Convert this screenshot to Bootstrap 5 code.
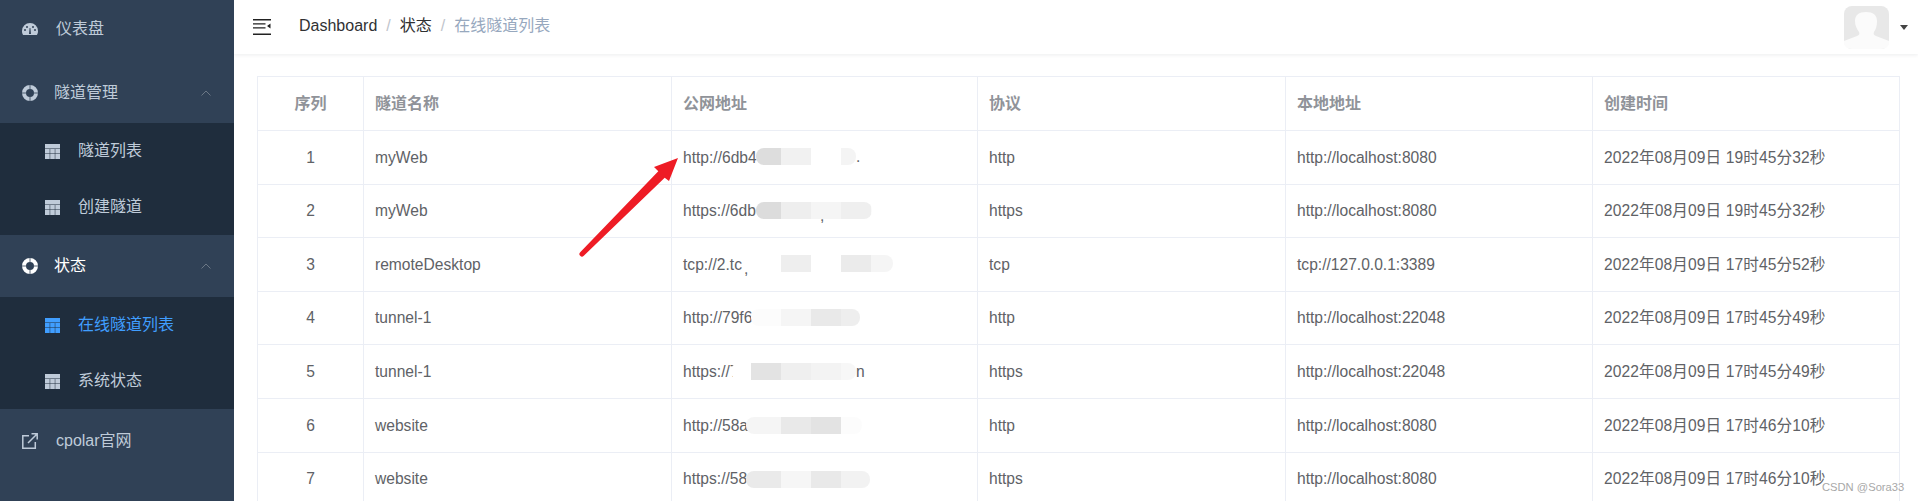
<!DOCTYPE html>
<html lang="en">
<head>
  <meta charset="UTF-8" />
  <meta name="viewport" content="width=device-width, initial-scale=1" />
  <title>cpolar</title>
  <link href="https://cdn.jsdelivr.net/npm/bootstrap@5.3.0/dist/css/bootstrap.min.css" rel="stylesheet" />
  <style>
    html, body { height: 100%; overflow: hidden; }
    body {
      position: relative;
      font-family: "Liberation Sans", "Noto Sans CJK SC", sans-serif;
      font-size: 15.6px;
      color: #606266;
    }
    .side-bar { width: 234px; background: #304156; flex-shrink: 0; }
    .side-link {
      display: flex;
      align-items: center;
      height: 62px;
      padding: 0 23px 4px 22px;
      color: #bfcbd9;
      font-size: 16px;
      text-decoration: none;
    }
    .side-link svg { flex-shrink: 0; }
    .side-link.sub-open { color: #bfcbd9; padding-bottom: 0; height: 61px; }
    .side-link.is-open { color: #fff; height: 62px; padding-bottom: 0; }
    .side-link.is-last { height: 64px; padding-bottom: 0; }
    .side-gap-wide { margin-right: 18px; }
    .side-gap { margin-right: 16px; }
    .sub-menu { background: #1f2d3d; }
    .sub-link {
      display: flex;
      align-items: center;
      height: 56px;
      padding-left: 45px;
      color: #bfcbd9;
      font-size: 16px;
      text-decoration: none;
    }
    .sub-link svg { margin-right: 18px; }
    .sub-link.is-active { color: #409eff; }
    .chev { margin-left: auto; }
    .top-bar {
      height: 54px;
      padding: 0 10px 0 19px;
      box-shadow: 0 1px 4px rgba(0, 21, 41, .08);
      flex-shrink: 0;
    }
    .crumbs { margin: 0 0 2px 28px; font-size: 16px; --bs-breadcrumb-item-padding-x: 9px; }
    .crumbs a { color: #303133; text-decoration: none; }
    .crumbs .active { color: #97a8be; }
    .breadcrumb-item + .breadcrumb-item::before { color: #c0c4cc; }
    .user-menu { color: #303133; text-decoration: none; }
    .user-menu.dropdown-toggle::after { margin-left: 11px; vertical-align: -21px; border-top-width: 5px; border-left-width: 4px; border-right-width: 4px; color: #444; }
    .page-body { padding: 22px 19px 0 23px; }
    .tunnel-table { table-layout: fixed; width: 1642px; margin: 0; --bs-table-border-color: #ebeef5; --bs-table-color: #606266; }
    .tunnel-table th, .tunnel-table td { padding: 0 11px; height: 53.6px; vertical-align: middle; font-weight: 400; color: #606266; }
    .tunnel-table th { height: 54px; font-weight: 700; font-size: 16px; color: #909399; }
    .w-idx { width: 106px; }
    .w-wide { width: 308px; }
    .w-mid { width: 307px; }
    .w-thin { width: 306px; }
    .stamp { letter-spacing: .1px; }
    .addr-cell { position: relative; }
    .smudge {
      position: absolute;
      height: 17px;
      border-radius: 8px;
    }
    .tail { position: absolute; left: 100%; top: -3px; }
    .speck { position: absolute; top: 2px; }
    .sm1 { left: 84px; top: 17px; width: 100px; background: linear-gradient(90deg, #ddd 0 25px, #f1f1f1 25px 55px, #fff 55px 85px, #f4f4f4 85px); }
    .sm2 { left: 84px; top: 17px; width: 116px; background: linear-gradient(90deg, #dcdcdc 0 25px, #eee 25px 55px, #f5f5f5 55px 85px, #efefef 85px 115px, #fafafa 115px); }
    .sm3 { left: 72px; top: 17px; width: 149px; background: linear-gradient(90deg, #fff 0 37px, #eee 37px 67px, #fff 67px 97px, #ebebeb 97px 127px, #f5f5f5 127px); }
    .sm4 { left: 79px; top: 17px; width: 109px; background: linear-gradient(90deg, #fcfcfc 0 30px, #f5f5f5 30px 60px, #e9e9e9 60px 90px, #eee 90px); }
    .sm5 { left: 59px; top: 18px; width: 125px; background: linear-gradient(90deg, #fff 0 20px, #e3e3e3 20px 50px, #efefef 50px 80px, #f3f3f3 80px 110px, #f7f7f7 110px); }
    .sm6 { left: 74px; top: 18px; width: 116px; background: linear-gradient(90deg, #f5f5f5 0 35px, #e9e9e9 35px 65px, #e3e3e3 65px 95px, #fcfcfc 95px); }
    .sm7 { left: 74px; top: 18px; width: 124px; background: linear-gradient(90deg, #eaeaea 0 35px, #f6f6f6 35px 65px, #e9e9e9 65px 95px, #f2f2f2 95px); }
    .arrow-mark { position: absolute; left: 575px; top: 150px; }
    .watermark {
      position: absolute;
      left: 1822px;
      top: 482px;
      font-size: 11.2px;
      color: #a8a8a8;
      line-height: 1;
    }
  </style>
</head>
<body>
  <div class="d-flex h-100">
    <aside class="side-bar">
      <nav class="d-flex flex-column">
        <a class="side-link" href="#">
          <svg class="side-gap-wide" width="16" height="14" viewBox="0 0 16 14"><path fill="#bfcbd9" fill-rule="evenodd" d="M8 1a8 8 0 0 0-8 8c0 1.6.4 3 1.2 4h13.6c.8-1 1.2-2.400 1.200-4a8 8 0 0 0-8-8zM7 12l.6-6h.8l.6 6zM3 9a1 1 0 1 1 0-2 1 1 0 0 1 0 2zm2-3a1 1 0 1 1 0-2 1 1 0 0 1 0 2zm6 0a1 1 0 1 1 0-2 1 1 0 0 1 0 2zm2 3a1 1 0 1 1 0-2 1 1 0 0 1 0 2z"/></svg>
          仪表盘
        </a>
        <a class="side-link sub-open" href="#">
          <svg class="side-gap" width="16" height="16" viewBox="0 0 16 16"><use href="#buoy-icon" stroke="#bfcbd9"/></svg>
          隧道管理
          <svg class="chev" width="10" height="6" viewBox="0 0 10 6"><path fill="none" stroke="#6b7785" d="M.5 5.500 5 1l4.500 4.500"/></svg>
        </a>
        <div class="sub-menu">
          <a class="sub-link" href="#">
            <svg width="15" height="15" viewBox="0 0 15 15"><use href="#grid-icon" fill="#bfcbd9"/></svg>
            隧道列表
          </a>
          <a class="sub-link" href="#">
            <svg width="15" height="15" viewBox="0 0 15 15"><use href="#grid-icon" fill="#bfcbd9"/></svg>
            创建隧道
          </a>
        </div>
        <a class="side-link is-open" href="#">
          <svg class="side-gap" width="16" height="16" viewBox="0 0 16 16"><use href="#buoy-icon" stroke="#fff"/></svg>
          状态
          <svg class="chev" width="10" height="6" viewBox="0 0 10 6"><path fill="none" stroke="#6b7785" d="M.5 5.500 5 1l4.500 4.500"/></svg>
        </a>
        <div class="sub-menu">
          <a class="sub-link is-active" href="#">
            <svg width="15" height="15" viewBox="0 0 15 15"><use href="#grid-icon" fill="#409eff"/></svg>
            在线隧道列表
          </a>
          <a class="sub-link" href="#">
            <svg width="15" height="15" viewBox="0 0 15 15"><use href="#grid-icon" fill="#bfcbd9"/></svg>
            系统状态
          </a>
        </div>
        <a class="side-link is-last" href="#">
          <svg class="side-gap-wide" width="16" height="16" viewBox="0 0 16 16"><path fill="none" stroke="#bfcbd9" stroke-width="1.500" d="M7 2.700H.8v12.500h12.500V9M6 10 15 1M9.500.8h5.700v5.700"/></svg>
          cpolar官网
        </a>
      </nav>
    </aside>

    <main class="flex-grow-1 d-flex flex-column overflow-hidden">
      <header class="top-bar d-flex align-items-center justify-content-between">
        <div class="d-flex align-items-center">
          <svg width="18" height="16" viewBox="0 0 18 16"><path fill="#222" d="M0 0h18v1.500H0zM0 4.300h12.500v1.200H0zM0 8.300h12.500v1.200H0zM0 14.500h18V16H0zM14 7l3.500-2.500v5z"/></svg>
          <nav aria-label="breadcrumb">
            <ol class="breadcrumb crumbs">
              <li class="breadcrumb-item"><a href="#">Dashboard</a></li>
              <li class="breadcrumb-item"><a href="#">状态</a></li>
              <li class="breadcrumb-item active" aria-current="page">在线隧道列表</li>
            </ol>
          </nav>
        </div>
        <a class="user-menu dropdown-toggle d-flex align-items-center" href="#" role="button">
          <svg width="45" height="43" viewBox="0 0 45 43"><rect width="45" height="43" rx="8" fill="#e8e8e8"/><path fill="#fbfbfb" d="M22 6c7 0 11 3 11 9 0 5-1 8-3 11-1 2 0 3 2 4l13 5v2c0 3-3 6-8 6H8c-5 0-8-3-8-6v-2l13-5c2-1 3-2 2-4-2-3-4-6-4-11 0-6 4-9 11-9z"/></svg>
        </a>
      </header>

      <div class="page-body">
        <table class="table table-bordered tunnel-table">
          <colgroup>
            <col class="w-idx" /><col class="w-wide" /><col class="w-thin" /><col class="w-wide" /><col class="w-mid" /><col class="w-mid" />
          </colgroup>
          <thead>
            <tr><th class="text-center">序列</th><th>隧道名称</th><th>公网地址</th><th>协议</th><th>本地地址</th><th>创建时间</th></tr>
          </thead>
          <tbody>
            <tr><td class="text-center">1</td><td>myWeb</td><td class="addr-cell">http://6db4<span class="smudge sm1"><span class="tail">.</span></span></td><td>http</td><td>http://localhost:8080</td><td class="stamp">2022年08月09日 19时45分32秒</td></tr>
            <tr><td class="text-center">2</td><td>myWeb</td><td class="addr-cell">https://6db<span class="smudge sm2"><span class="speck ms-5 ps-3">,</span></span></td><td>https</td><td>http://localhost:8080</td><td class="stamp">2022年08月09日 19时45分32秒</td></tr>
            <tr><td class="text-center">3</td><td>remoteDesktop</td><td class="addr-cell">tcp://2.tc<span class="smudge sm3"><span class="speck">,</span></span></td><td>tcp</td><td>tcp://127.0.0.1:3389</td><td class="stamp">2022年08月09日 17时45分52秒</td></tr>
            <tr><td class="text-center">4</td><td>tunnel-1</td><td class="addr-cell">http://79f6<span class="smudge sm4"></span></td><td>http</td><td>http://localhost:22048</td><td class="stamp">2022年08月09日 17时45分49秒</td></tr>
            <tr><td class="text-center">5</td><td>tunnel-1</td><td class="addr-cell">https://7<span class="smudge sm5"><span class="tail">n</span></span></td><td>https</td><td>http://localhost:22048</td><td class="stamp">2022年08月09日 17时45分49秒</td></tr>
            <tr><td class="text-center">6</td><td>website</td><td class="addr-cell">http://58a<span class="smudge sm6"></span></td><td>http</td><td>http://localhost:8080</td><td class="stamp">2022年08月09日 17时46分10秒</td></tr>
            <tr><td class="text-center">7</td><td>website</td><td class="addr-cell">https://58<span class="smudge sm7"></span></td><td>https</td><td>http://localhost:8080</td><td class="stamp">2022年08月09日 17时46分10秒</td></tr>
          </tbody>
        </table>
      </div>
    </main>
  </div>

  <svg class="arrow-mark" width="110" height="115" viewBox="0 0 110 115"><path fill="#ee1c25" d="M103 8 79 17l4.300 4.300L5.200 102.200a2.500 2.500 0 0 0 3.600 3.600L89.700 27.700 94 31z"/></svg>
  <div class="watermark">CSDN @Sora33</div>

  <svg width="0" height="0" class="d-block">
    <symbol id="grid-icon" viewBox="0 0 15 15"><path d="M0 0h15v4.600H0zM0 5.100h4.700v4.500H0zM5.200 5.100h4.600v4.500H5.200zM10.300 5.100H15v4.500h-4.700zM0 10.100h4.700V15H0zM5.200 10.100h4.600V15H5.200zM10.300 10.100H15V15h-4.700z"/></symbol>
    <symbol id="buoy-icon" viewBox="0 0 16 16"><circle cx="8" cy="8" r="6" fill="none" stroke-width="4"/><path fill="none" stroke="#304156" stroke-width=".8" d="M8 0v4M8 12v4M0 8h4M12 8h4"/></symbol>
  </svg>

  <script src="https://cdn.jsdelivr.net/npm/bootstrap@5.3.0/dist/js/bootstrap.bundle.min.js"></script>
</body>
</html>
